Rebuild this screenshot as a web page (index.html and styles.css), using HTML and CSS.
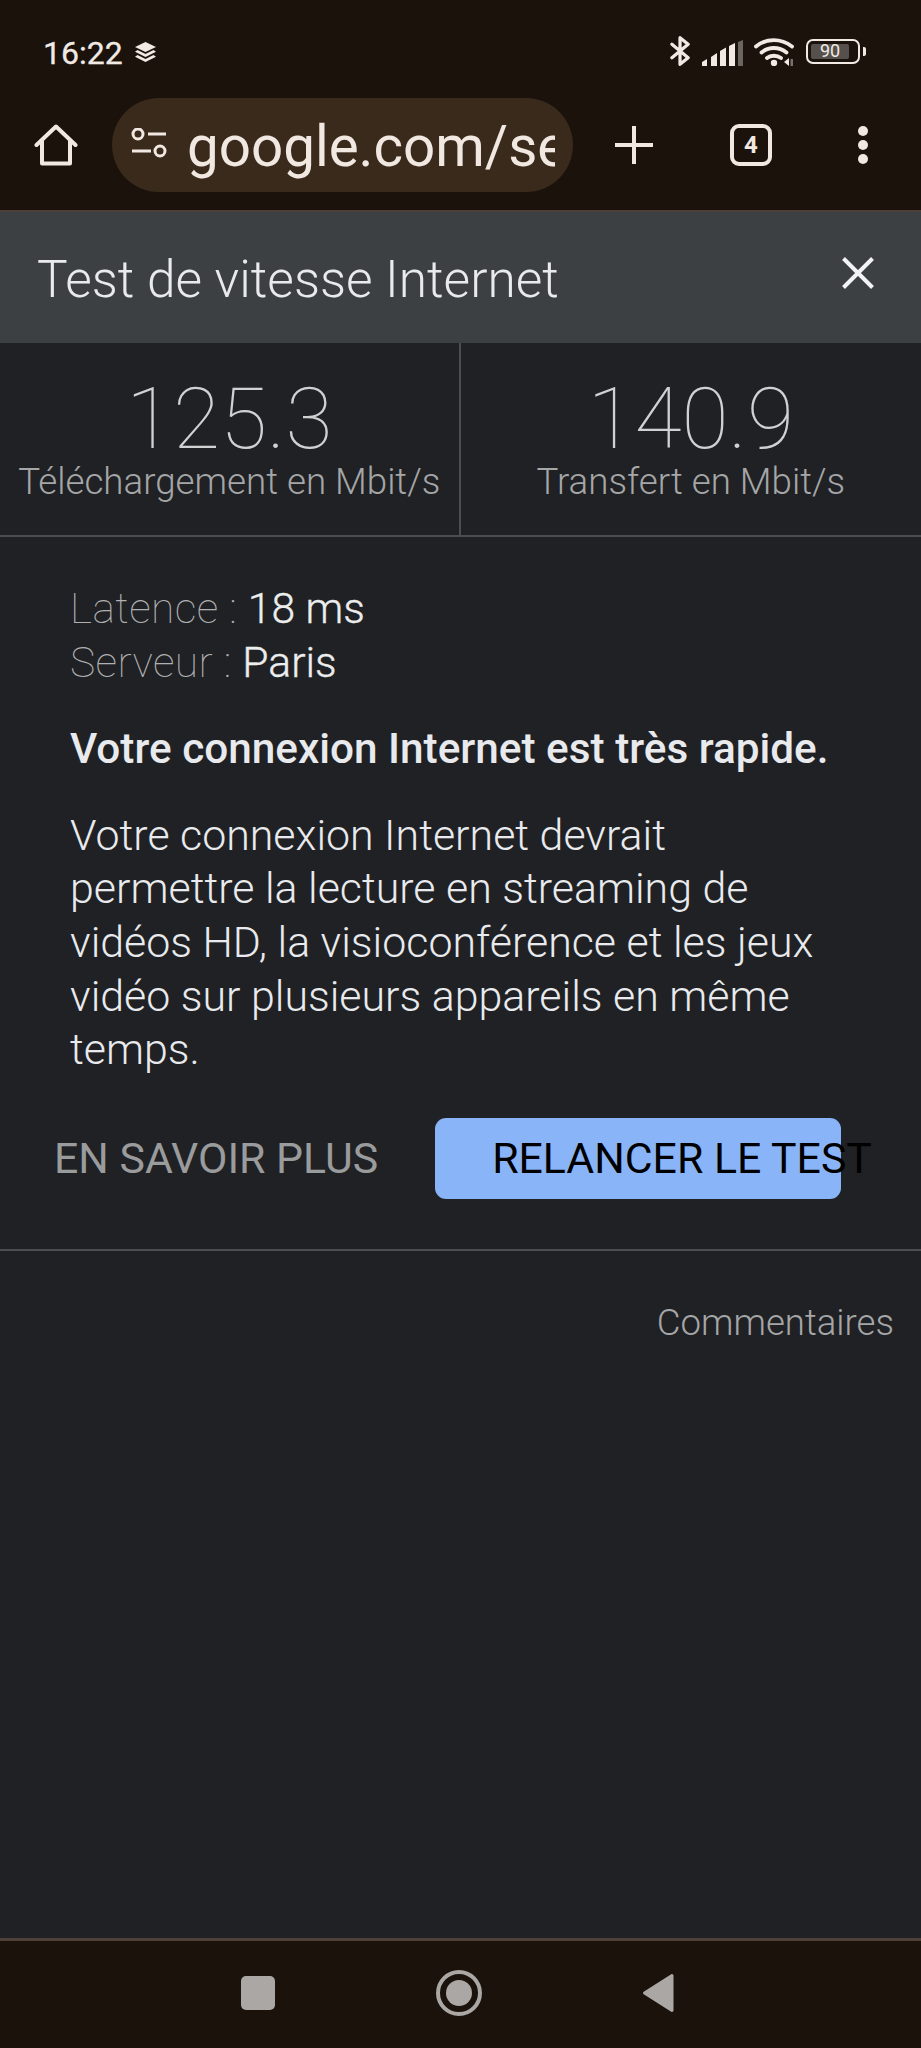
FILE: index.html
```html
<!DOCTYPE html>
<html lang="fr">
<head>
<meta charset="utf-8">
<title>Test de vitesse Internet</title>
<link rel="stylesheet" href="styles.css">
</head>
<body>
<div class="phone">
  <header class="chrome">
    <div class="status">
      <div class="status-left">
        <span class="time">16:22</span>
        <svg class="i-layers" viewBox="0 0 21 20"><path d="M10.500 0 21 5 10.500 10 0 5Z" fill="#f1eae4"/><path d="M2.500 8 10.500 12 18.500 8 21 9.800 10.500 15 0 9.800Z" fill="#f1eae4"/><path d="M2.500 13 10.500 17 18.500 13 21 14.800 10.500 20 0 14.800Z" fill="#f1eae4"/></svg>
      </div>
      <div class="status-right">
        <svg class="i-bt" viewBox="0 0 22 32"><path d="M2 9 19 23 10.500 30V2L19 9 2 23" fill="none" stroke="#f1eae4" stroke-width="3.400" stroke-linejoin="round" stroke-linecap="round"/></svg>
        <svg class="i-signal" viewBox="0 0 41 26"><path d="M0 22 5 19V26H0Z" fill="#f1eae4"/><path d="M9 17 15 13V26H9Z" fill="#f1eae4"/><path d="M18 11 24 7.500V26H18Z" fill="#f1eae4"/><path d="M27 6 33 3V26H27Z" fill="#f1eae4"/><path d="M36 2 41 0V26H36Z" fill="#6b6560"/></svg>
        <svg class="i-wifi" viewBox="0 0 40 29"><path d="M2 9.500C12 1 27 1 38 9.500M7.500 15.500C14.500 9.500 25 9.500 32.500 15.500M13 21C16.500 18 23 18 27 21" fill="none" stroke="#f1eae4" stroke-width="3.800" stroke-linecap="round"/><circle cx="20" cy="26" r="3.200" fill="#f1eae4"/><path d="M30 25 35 21V29Z" fill="#f1eae4"/><path d="M36.500 22H39V29H36.500Z" fill="#77716c"/></svg>
        <div class="battery"><div class="battery-body"><span class="battery-fill">90</span></div><span class="battery-tip"></span></div>
      </div>
    </div>
    <div class="toolbar">
      <svg class="i-home" viewBox="0 0 44 42"><path d="M2.500 21 22 2.500 41.500 21M8 17V39.500H36V17" fill="none" stroke="#f1e8e2" stroke-width="4" stroke-linejoin="round" stroke-linecap="round"/></svg>
      <div class="omnibox">
        <svg class="i-tune" viewBox="0 0 36 30"><circle cx="7" cy="6" r="5" fill="none" stroke="#f1e8e2" stroke-width="3"/><path d="M17 6H35M1 23H20" stroke="#f1e8e2" stroke-width="3"/><circle cx="29" cy="23" r="5" fill="none" stroke="#f1e8e2" stroke-width="3"/></svg>
        <span class="url">google.com/search</span>
      </div>
      <svg class="i-plus" viewBox="0 0 38 38"><path d="M19 0V38M0 19H38" stroke="#f1e8e2" stroke-width="4" stroke-linecap="round"/></svg>
      <div class="tabs">4</div>
      <div class="dots"><span></span><span></span><span></span></div>
    </div>
  </header>
  <main class="content">
    <div class="panel-head">
      <h1 class="panel-title">Test de vitesse Internet</h1>
      <svg class="i-close" viewBox="0 0 32 32"><path d="M1.500 1.500 30.500 30.500M30.500 1.500 1.500 30.500" stroke="#f1f3f4" stroke-width="4"/></svg>
    </div>
    <section class="stats">
      <div class="stat">
        <div class="stat-num">125.3</div>
        <div class="stat-label">Téléchargement en Mbit/s</div>
      </div>
      <div class="stat">
        <div class="stat-num">140.9</div>
        <div class="stat-label">Transfert en Mbit/s</div>
      </div>
    </section>
    <section class="info">
      <p class="meta"><span class="meta-key">Latence : </span>18 ms</p>
      <p class="meta"><span class="meta-key">Serveur : </span>Paris</p>
      <p class="verdict">Votre connexion Internet est très rapide.</p>
      <p class="desc">Votre connexion Internet devrait permettre la lecture en streaming de vidéos HD, la visioconférence et les jeux vidéo sur plusieurs appareils en même temps.</p>
    </section>
    <div class="actions">
      <span class="btn-link">EN SAVOIR PLUS</span>
      <div class="btn-primary">RELANCER LE TEST</div>
    </div>
    <div class="feedback"><span>Commentaires</span></div>
  </main>
  <footer class="navbar">
    <span class="nav-square"></span>
    <span class="nav-circle"><span class="nav-dot"></span></span>
    <svg class="nav-back" viewBox="0 0 33 40"><path d="M30 2.500 2.500 20 30 37.500Z" fill="#aaa7a5" stroke="#aaa7a5" stroke-width="3" stroke-linejoin="round"/></svg>
  </footer>
</div>
</body>
</html>
```
FILE: styles.css
```css
* { box-sizing: border-box; }
html, body { margin: 0; padding: 0; background: #202124; }
body { font-family: Roboto, "Liberation Sans", sans-serif; }
.phone { width: 921px; height: 2048px; display: flex; flex-direction: column; overflow: hidden; }
svg { display: block; flex: none; }

.chrome { background: #1a120b; height: 212px; border-bottom: 2px solid #4c4039; flex: none; }
.status { height: 98px; display: flex; justify-content: space-between; align-items: flex-start; padding: 35px 55px 0 43px; }
.status-left { display: flex; align-items: center; gap: 12px; height: 32px; margin-top: 2px; }
.time { font-size: 32px; font-weight: 400; line-height: 32px; color: #f1eae4; -webkit-text-stroke: 0.3px #f1eae4; }
.i-layers { width: 21px; height: 20px; margin-top: -3px; }
.status-right { display: flex; align-items: center; height: 32px; }
.i-bt { width: 21px; height: 32px; }
.i-signal { width: 41px; height: 26px; margin-left: 11px; margin-top: 4px; }
.i-wifi { width: 40px; height: 29px; margin-left: 11px; }
.battery { display: flex; align-items: center; margin-left: 12px; }
.battery-body { width: 54px; height: 25px; border: 2.500px solid #f1eae4; border-radius: 7px; padding: 3px; display: flex; }
.battery-fill { width: 38px; background: #55504c; color: #f1eae4; font-size: 18px; line-height: 14px; text-align: center; border-radius: 2px; }
.battery-tip { width: 3px; height: 9px; background: #f1eae4; margin-left: 3px; border-radius: 0 2px 2px 0; }

.toolbar { display: flex; align-items: center; height: 94px; padding-left: 34px; }
.i-home { width: 44px; height: 42px; }
.omnibox { width: 461px; height: 94px; margin-left: 34px; background: #3a2a1c; border-radius: 47px; display: flex; align-items: center; padding: 0 18px 0 19px; overflow: hidden; }
.i-tune { width: 36px; height: 30px; margin-top: -4px; }
.url { margin-left: 20px; font-size: 56.500px; line-height: 94px; padding-top: 4px; color: #f1e8e2; white-space: nowrap; overflow: hidden; flex: 1; min-width: 0; -webkit-mask-image: linear-gradient(to right, #000 86%, #d8d8d8 100%); mask-image: linear-gradient(to right, #000 86%, #d8d8d8 100%); }
.i-plus { width: 38px; height: 38px; margin-left: 42px; }
.tabs { width: 42px; height: 42px; margin-left: 77px; border: 4px solid #f1e8e2; border-radius: 9px; color: #f1e8e2; font-size: 24px; font-weight: 700; line-height: 34px; text-align: center; }
.dots { display: flex; flex-direction: column; gap: 4px; margin-left: 86px; }
.dots span { width: 10px; height: 10px; border-radius: 50%; background: #f1e8e2; }

.content { flex: 1; display: flex; flex-direction: column; background: #202124; min-height: 0; }
.panel-head { height: 131px; background: #3c4043; display: flex; align-items: center; justify-content: space-between; padding: 0 47px 0 37px; flex: none; }
.panel-title { margin: 0; font-size: 51.400px; font-weight: 300; color: #e8eaed; line-height: 131px; padding-top: 4px; }
.i-close { width: 32px; height: 32px; margin-top: -10px; }

.stats { display: grid; grid-template-columns: 1fr 1fr; height: 194px; border-bottom: 2px solid #4b4d50; flex: none; }
.stat { text-align: center; padding-top: 34px; }
.stat:first-child { border-right: 2px solid #4b4d50; }
.stat-num { font-size: 86px; font-weight: 100; line-height: 84px; color: #d0d1d2; }
.stat-label { font-size: 36.700px; font-weight: 300; line-height: 41px; color: #a5a6a7; }

.info { padding: 45px 80px 0 70px; }
.info p { margin: 0; }
.meta { font-size: 42.600px; font-weight: 300; line-height: 53.600px; color: #eceded; -webkit-text-stroke: 0.35px #eceded; }
.meta-key { color: #b0b1b3; font-weight: 100; letter-spacing: 0.4px; -webkit-text-stroke: 0; }
.verdict { font-size: 42.300px; font-weight: 500; line-height: 53.600px; color: #e8eaed; padding-top: 33px; }
.desc { font-size: 42.900px; font-weight: 300; line-height: 53.600px; color: #e8eaed; padding-top: 33px; }

.actions { display: flex; align-items: center; margin-top: 41px; padding: 0 0 50px 54px; border-bottom: 2px solid #4b4d50; flex: none; }
.btn-link { font-size: 42.800px; color: #9a9b9c; white-space: nowrap; }
.btn-primary { width: 406px; height: 81px; margin-left: 57px; padding-left: 57px; background: #8ab4f8; border-radius: 11px; color: #000; font-size: 42.800px; line-height: 81px; white-space: nowrap; }

.feedback { text-align: right; padding: 50px 27px 0 0; font-size: 36.600px; font-weight: 300; line-height: 44px; color: #a5a6a7; }

.navbar { height: 110px; background: #1a120b; border-top: 3px solid #4c4039; display: flex; align-items: center; padding-left: 241px; flex: none; }
.nav-square { width: 34px; height: 34px; background: #aaa7a5; border-radius: 5px; margin-top: -3px; }
.nav-circle { width: 46px; height: 46px; margin-left: 161px; margin-top: -3px; border: 4px solid #aaa7a5; border-radius: 50%; display: flex; align-items: center; justify-content: center; }
.nav-dot { width: 26px; height: 26px; background: #aaa7a5; border-radius: 50%; }
.nav-back { width: 33px; height: 40px; margin-left: 160px; margin-top: -3px; }
```
